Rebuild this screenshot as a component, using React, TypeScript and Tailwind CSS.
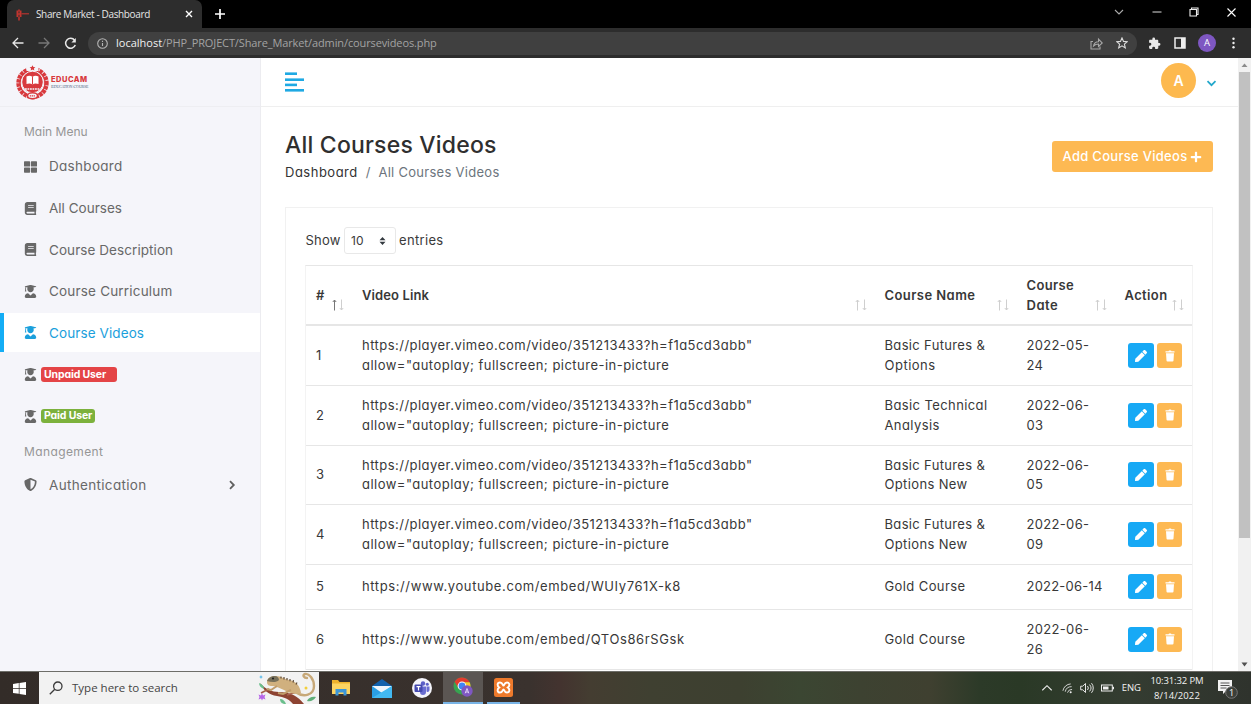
import type { ReactNode } from "react";
import { FaBook, FaPen, FaPlus, FaShieldAlt, FaThLarge, FaUserGraduate } from "react-icons/fa";

function BrowserChrome() {
  return (
    <div className="shrink-0 font-['Open_Sans',sans-serif]">
      <div className="flex h-7 bg-black">
        <div className="ml-[7px] flex w-[195px] items-center rounded-t-[7px] bg-[#2d2d2d] pl-[8px]">
          <svg className="size-[15px]" viewBox="0 0 15 15">
            <g fill="none" stroke="#c0342f">
              <path d="M2.500 3.500v6.500M5.500 3.500v6.500" strokeWidth="2" />
              <path d="M2 7h4M4 10v3.500M4 2.500v2" strokeWidth="1.6" />
              <path d="M6.500 6.800h7.500" strokeWidth="1.1" />
            </g>
          </svg>
          <span className="ml-[6px] whitespace-nowrap text-[10px] tracking-[-0.36px] text-[#e6e6e6]">
            Share Market - Dashboard
          </span>
          <svg className="ml-[35px] size-[8px]" viewBox="0 0 8 8" stroke="#fff" strokeWidth="1.4">
            <path d="M1 1l6 6M7 1L1 7" />
          </svg>
        </div>
        <svg className="ml-[13px] mt-[9px] size-[10px]" viewBox="0 0 10 10" stroke="#fff" strokeWidth="1.7">
          <path d="M5 0v10M0 5h10" />
        </svg>
        <div className="ml-auto flex items-center pb-[4px] pr-[15px]">
          <svg className="size-[10px]" viewBox="0 0 10 10" fill="none" stroke="#aaa" strokeWidth="1.1">
            <path d="M1 3l4 4 4-4" />
          </svg>
          <svg className="ml-[28px] size-[10px]" viewBox="0 0 10 10" stroke="#ddd" strokeWidth="1">
            <path d="M.5 5h9" />
          </svg>
          <svg className="ml-[27px] size-[10px]" viewBox="0 0 10 10" fill="none" stroke="#eee" strokeWidth="1.1">
            <path d="M1 2.5h6.5V9H1zM2.5 2.5V1H9v6.5H7.5" />
          </svg>
          <svg className="ml-[28px] size-[9px]" viewBox="0 0 9 9" stroke="#fff" strokeWidth="1.1">
            <path d="M.5.5l8 8M8.5.5l-8 8" />
          </svg>
        </div>
      </div>
      <div className="flex h-[30px] items-center bg-[#2d2d2d] pl-[12px] pr-[16px]">
        <svg className="size-[12px]" viewBox="0 0 12 12" fill="none" stroke="#e8e8e8" strokeWidth="1.3">
          <path d="M11.5 6H1.2M6 1L1 6l5 5" />
        </svg>
        <svg className="ml-[14px] size-[12px]" viewBox="0 0 12 12" fill="none" stroke="#777" strokeWidth="1.3">
          <path d="M.5 6h10.3M6 1l5 5-5 5" />
        </svg>
        <svg className="ml-[14px] size-[13px]" viewBox="0 0 13 13" fill="none" stroke="#e8e8e8" strokeWidth="1.5">
          <path d="M10.6 3.2A5 5 0 1 0 11.3 8" />
          <path d="M11.8 1v4.400H7.400z" fill="#e8e8e8" stroke="none" />
        </svg>
        <div className="ml-[11px] flex h-[23px] w-[1049px] items-center rounded-full bg-[#404040] pl-[9px] pr-[9px]">
          <svg className="size-[11px]" viewBox="0 0 11 11" fill="none" stroke="#b5b5b5" strokeWidth="1.1">
            <circle cx="5.5" cy="5.5" r="4.8" />
            <path d="M5.5 5v3M5.5 2.8v1.1" />
          </svg>
          <span className="ml-[8px] whitespace-nowrap text-[11px] text-[#a3a3a3]">
            <span className="text-[#f1f1f1]">localhost</span>
            <span className="tracking-[-0.12px]">/PHP_PROJECT/Share_Market/admin/coursevideos.php</span>
          </span>
          <svg className="ml-auto size-[13px]" viewBox="0 0 13 13" fill="none" stroke="#a8a8a8" strokeWidth="1.1">
            <path d="M3 4.500H1v7.500h9V9.500" />
            <path d="M3.500 9C4 6 6 4.700 8.500 4.700V2.200L12.300 6 8.500 9.500V7C6.500 7 5 7.500 3.500 9z" />
          </svg>
          <svg className="ml-[13px] size-[12px]" viewBox="0 0 12 12" fill="none" stroke="#ddd" strokeWidth="1.1">
            <path d="M6 .9l1.500 3.500 3.800.3-2.900 2.500.9 3.700L6 8.900l-3.300 2 .9-3.700L.7 4.700l3.800-.3z" />
          </svg>
        </div>
        <svg className="ml-[11px] size-[13px]" viewBox="0 0 24 24" fill="#e8e8e8">
          <path d="M20.500 11H19V7c0-1.100-.9-2-2-2h-4V3.500a2.500 2.500 0 0 0-5 0V5H4c-1.100 0-2 .9-2 2v3.800h1.500a2.700 2.700 0 0 1 0 5.400H2V20c0 1.100.9 2 2 2h3.800v-1.500a2.700 2.700 0 0 1 5.400 0V22H17c1.100 0 2-.9 2-2v-4h1.500a2.500 2.500 0 0 0 0-5z" />
        </svg>
        <svg className="ml-[13px] size-[12px]" viewBox="0 0 12 12">
          <path d="M1 1h10v10H1z" fill="none" stroke="#eee" strokeWidth="1.5" />
          <path d="M7 1h4v10H7z" fill="#eee" />
        </svg>
        <div className="ml-[12px] flex size-[18px] items-center justify-center rounded-full bg-[#7e57c2] text-[9.5px] text-white">
          A
        </div>
        <svg className="ml-auto h-[12px] w-[3px]" viewBox="0 0 3 12" fill="#eee">
          <circle cx="1.5" cy="1.7" r="1.2" />
          <circle cx="1.5" cy="6" r="1.2" />
          <circle cx="1.5" cy="10.3" r="1.2" />
        </svg>
      </div>
    </div>
  );
}

function Logo() {
  return (
    <div className="flex h-[48px] items-center pl-[15px] pt-[1px]">
      <svg className="h-[35px] w-[35px]" viewBox="0 0 35 35">
        <circle cx="17.5" cy="18" r="14" fill="none" stroke="#d83a3e" strokeWidth="4.4" strokeDasharray="3.4 .7" strokeDashoffset="1" />
        <circle cx="17.5" cy="18" r="12.6" fill="none" stroke="#d83a3e" strokeWidth="1.2" />
        <path d="M11.500 0h12v6h-12z" fill="#f5f5fa" />
        <path d="M17.500.3l.9 1.800 2 .2-1.500 1.300.4 2-1.800-1-1.800 1 .4-2-1.500-1.300 2-.2z" fill="#d83a3e" />
        <circle cx="17.5" cy="17" r="10.800" fill="#d83a3e" stroke="#f5f5fa" strokeWidth="1" />
        <path d="M11.500 11.500c2.300-1.200 4.500-.9 6 .5 1.500-1.400 3.700-1.700 6-.5v7.500c-2.300-.9-4.500-.7-6 .5-1.500-1.200-3.700-1.400-6-.5z" fill="#fff" />
        <path d="M17.500 12v7.500" stroke="#d83a3e" fill="none" />
        <path d="M10 24h15" stroke="#f5f5fa" strokeWidth="1.5" strokeDasharray="1.8 .7" />
        <ellipse cx="17.5" cy="30.800" rx="5" ry="3" fill="#f5f5fa" stroke="#d83a3e" strokeWidth="1.500" />
        <path d="M14.800 30.800h5.400" stroke="#d83a3e" strokeWidth="1.300" strokeDasharray="1.300 .6" />
      </svg>
      <div className="ml-[1px] whitespace-nowrap">
        <div className="font-['Inter',sans-serif] text-[7.5px] font-extrabold leading-[8px] tracking-[0.5px] text-[#d8383c]">
          EDUCAM
        </div>
        <div className="font-['Liberation_Serif',serif] text-[5px] leading-[6px] tracking-[-0.25px] text-[#4d6384] [font-variant-caps:small-caps]">
          Education Course
        </div>
      </div>
    </div>
  );
}

function NavItem({ icon, active, children }: { icon: ReactNode; active?: boolean; children: ReactNode }) {
  return (
    <div
      className={
        active
          ? "mb-[2.6px] flex h-[39px] items-center border-l-4 border-[#14adf5] bg-white pl-[20px] text-[#1ba0dc]"
          : "mb-[2.6px] flex h-[39px] items-center pl-[24px] text-[#686868]"
      }
    >
      <span className="flex w-[13px] shrink-0 justify-center">{icon}</span>
      {children}
    </div>
  );
}

function Sidebar() {
  const cap = <FaUserGraduate className="size-[13px]" />;
  return (
    <div className="w-[261px] shrink-0 border-r border-[#ececf0] bg-[#f5f5fa] text-[13.5px]">
      <Logo />
      <div className="flex h-[41px] items-end border-t border-[#eeeef2] pb-[6px] pl-[24px] text-[12px] text-[#969696]">
        Main Menu
      </div>
      <NavItem icon={<FaThLarge className="size-[14px]" />}>
        <span className="ml-[12px] tracking-[0.3px]">Dashboard</span>
      </NavItem>
      <NavItem icon={<FaBook className="size-[13px]" />}>
        <span className="ml-[12px] tracking-[0.02px]">All Courses</span>
      </NavItem>
      <NavItem icon={<FaBook className="size-[13px]" />}>
        <span className="ml-[12px] tracking-[0.07px]">Course Description</span>
      </NavItem>
      <NavItem icon={cap}>
        <span className="ml-[12px] tracking-[0.19px]">Course Curriculum</span>
      </NavItem>
      <NavItem active icon={cap}>
        <span className="ml-[12px] tracking-[0.1px]">Course Videos</span>
      </NavItem>
      <NavItem icon={cap}>
        <span className="ml-[4px] flex h-[14.5px] w-[76px] items-center rounded-[3px] bg-[#e44446] pl-[3px] text-[10.5px] font-bold tracking-[-0.13px] text-white">
          Unpaid User
        </span>
      </NavItem>
      <NavItem icon={cap}>
        <span className="ml-[4px] flex h-[14.5px] w-[54px] items-center rounded-[3px] bg-[#7cb13c] pl-[3px] text-[10.5px] font-bold tracking-[-0.13px] text-white">
          Paid User
        </span>
      </NavItem>
      <div className="flex h-[27px] items-center pl-[24px] text-[12px] tracking-[0.38px] text-[#969696]">Management</div>
      <NavItem icon={<FaShieldAlt className="size-[13px]" />}>
        <span className="ml-[12px] tracking-[0.33px]">Authentication</span>
        <svg className="ml-auto mr-[23px] size-[10px]" viewBox="0 0 10 10" fill="none" stroke="#606060" strokeWidth="1.800">
          <path d="M3 1.200L6.800 5 3 8.800" />
        </svg>
      </NavItem>
    </div>
  );
}

function SortArrows({ up }: { up?: boolean }) {
  return (
    <svg className="absolute bottom-[13px] right-[7px] h-[12px] w-[14px]" viewBox="0 0 14 12" fill="none">
      <path d="M3.500 11.500V1M1.800 3l1.700-2 1.700 2" stroke={up ? "#777" : "#cfcfcf"} />
      <path d="M10.500.5V11M8.800 9l1.700 2 1.700-2" stroke="#cfcfcf" />
    </svg>
  );
}

const cols = "grid grid-cols-[46px_522.500px_142px_98px_1fr]";

type Line = [string, string];
type Row = { h: string; link: Line[]; name: Line[]; date: Line[] };

const vimeo: Line[] = [
  ['https://player.vimeo.com/video/351213433?h=f1a5cd3abb"', "tracking-[0.47px]"],
  ['allow="autoplay; fullscreen; picture-in-picture', "tracking-[0.475px]"],
];
const basicFutures: Line = ["Basic Futures &", "tracking-[0.34px]"];
const june: Line = ["2022-06-", "tracking-[0.33px]"];

const rows: Row[] = [
  { h: "h-[60px]", link: vimeo, name: [basicFutures, ["Options", "tracking-[0.5px]"]], date: [["2022-05-", "tracking-[0.33px]"], ["24", "tracking-[0.2px]"]] },
  { h: "h-[59.5px]", link: vimeo, name: [["Basic Technical", "tracking-[0.4px]"], ["Analysis", "tracking-[0.4px]"]], date: [june, ["03", "tracking-[0.2px]"]] },
  { h: "h-[59.5px]", link: vimeo, name: [basicFutures, ["Options New", "tracking-[0.36px]"]], date: [june, ["05", "tracking-[0.2px]"]] },
  { h: "h-[59.5px]", link: vimeo, name: [basicFutures, ["Options New", "tracking-[0.36px]"]], date: [june, ["09", "tracking-[0.2px]"]] },
  { h: "h-[45.5px]", link: [["https://www.youtube.com/embed/WUIy761X-k8", "tracking-[0.606px]"]], name: [["Gold Course", "tracking-[0.4px]"]], date: [["2022-06-14", "tracking-[0.21px]"]] },
  { h: "h-[59.5px]", link: [["https://www.youtube.com/embed/QTOs86rSGsk", "tracking-[0.6px]"]], name: [["Gold Course", "tracking-[0.4px]"]], date: [june, ["26", "tracking-[0.2px]"]] },
];

function Cell({ lines }: { lines: Line[] }) {
  return (
    <div className="flex flex-col justify-center whitespace-nowrap pl-[10px] pt-[1px] leading-[19.6px]">
      {lines.map(([text, cls]) => (
        <div key={text} className={cls}>
          {text}
        </div>
      ))}
    </div>
  );
}

function CourseTable() {
  return (
    <div className="mt-[11px] border-x border-t border-[#e6e6e6] border-x-[#f3f3f3] text-[13px] text-[#383838]">
      <div className={`${cols} h-[60px] items-stretch border-b-2 border-[#e6e6e6] font-semibold leading-[19.6px]`}>
        <div className="relative flex items-center pl-[10px] pt-[2px]">
          #<SortArrows up />
        </div>
        <div className="relative flex items-center pl-[10px] pt-[2px] tracking-[0.1px]">
          Video Link
          <SortArrows />
        </div>
        <div className="relative flex items-center pl-[10px] pt-[2px] tracking-[0.44px]">
          Course Name
          <SortArrows />
        </div>
        <div className="relative flex flex-col justify-center pl-[10px] pt-[2px]">
          <span className="tracking-[0.34px]">Course</span>
          <span className="tracking-[0.55px]">Date</span>
          <SortArrows />
        </div>
        <div className="relative flex items-center pl-[10px] pt-[2px] tracking-[0.38px]">
          Action
          <SortArrows />
        </div>
      </div>
      {rows.map((r, i) => (
        <div key={i} className={`${cols} ${r.h} border-b border-[#e6e6e6]`}>
          <Cell lines={[[String(i + 1), ""]]} />
          <Cell lines={r.link} />
          <Cell lines={r.name} />
          <Cell lines={r.date} />
          <div className="flex items-center gap-[3px] pl-[13.5px] text-white">
            <span className="flex h-[25px] w-[26px] items-center justify-center rounded-[3px] bg-[#17a9f5]">
              <FaPen className="size-[12px]" />
            </span>
            <span className="flex h-[25px] w-[25px] items-center justify-center rounded-[3px] bg-[#fdb953]">
              <svg className="size-[12px]" viewBox="0 0 12 12" fill="#fff">
                <path d="M1.500 1.200h3L5 .5h2l.5.700h3v1.300h-9zM2 3.200h8l-.5 7.300a1 1 0 0 1-1 1h-5a1 1 0 0 1-1-1z" />
              </svg>
            </span>
          </div>
        </div>
      ))}
    </div>
  );
}

function Main() {
  return (
    <div className="flex min-w-0 flex-1 flex-col bg-white">
      <div className="flex h-[49px] shrink-0 items-center border-b border-[#efefef] pl-[24px] pr-[21px]">
        <svg className="h-[20px] w-[19px]" viewBox="0 0 19 20" fill="#1fa9e3">
          <rect y=".4" width="12" height="2.6" />
          <rect y="6.4" width="19" height="2.6" />
          <rect y="11.6" width="12" height="2.6" />
          <rect y="17" width="19" height="2.6" />
        </svg>
        <div className="mb-[3px] ml-auto flex size-[35px] items-center justify-center rounded-full bg-[#fdb94f] text-[14px] font-semibold text-white">
          A
        </div>
        <svg className="ml-[10px] mt-[3px] size-[11px]" viewBox="0 0 11 11" fill="none" stroke="#22a7cb" strokeWidth="1.7">
          <path d="M1.500 3.200l4 4 4-4" />
        </svg>
      </div>
      <div className="flex h-[100px] shrink-0 justify-between pl-[24px] pr-[25px]">
        <div className="pt-[22px]">
          <h1 className="text-[23px] font-medium leading-[32px] tracking-[0.2px] text-[#2f2f2f]">All Courses Videos</h1>
          <div className="flex text-[13px] leading-[23px]">
            <span className="tracking-[0.5px] text-[#333]">Dashboard</span>
            <span className="ml-[8px] text-[#6c757d]">/</span>
            <span className="ml-[8px] tracking-[0.28px] text-[#6c757d]">All Courses Videos</span>
          </div>
        </div>
        <div className="mt-[34px] flex h-[31px] w-[161px] items-center rounded-[3px] bg-[#fdb953] pl-[10.500px] pt-[1px] text-[13px] font-medium text-white">
          <span className="whitespace-nowrap tracking-[0.29px]">Add Course Videos</span>
          <FaPlus className="ml-[3px] size-[12px]" />
        </div>
      </div>
      <div className="ml-[24px] mr-[25px] flex-1 border border-b-0 border-[#f1f1f1] px-[19px] pt-[19px]">
        <div className="flex h-[27px] items-center text-[13px] text-[#3a3a3a]">
          <span className="w-[39px] pl-[.5px] tracking-[0.19px]">Show</span>
          <span className="flex h-[27px] w-[52px] items-center justify-between rounded-[3px] border border-[#e8e8e8] pl-[6px] pr-[9px] text-[12px]">
            10
            <svg className="h-[8px] w-[7px]" viewBox="0 0 7 8" fill="#343a40">
              <path d="M3.500 0l3 3.300h-6zM3.500 8l3-3.300h-6z" />
            </svg>
          </span>
          <span className="ml-[3px] tracking-[0.33px]">entries</span>
        </div>
        <CourseTable />
      </div>
    </div>
  );
}

function Scrollbar() {
  return (
    <div className="flex w-[13px] shrink-0 flex-col items-center bg-[#f1f1f1]">
      <svg className="h-[14px] w-[7px]" viewBox="0 0 7 14" fill="#8b8b8b">
        <path d="M3.500 5.500L6.500 9h-6z" />
      </svg>
      <div className="h-[466px] w-[11px] bg-[#c1c1c1]" />
      <svg className="mt-auto h-[14px] w-[7px]" viewBox="0 0 7 14" fill="#505050">
        <path d="M3.500 9.500L.5 5.500h6z" />
      </svg>
    </div>
  );
}

function Lizard() {
  return (
    <svg className="h-[32px] w-[62px]" viewBox="0 0 62 32">
      <path d="M3 11c5 6 12 9 19 9 11 0 19 4 25 12H36c-4-5-9-7-16-8C12 23 6 18 3 11z" fill="#8d4332" />
      <path d="M4 21l8-4M30 23l10-3" stroke="#a5604a" strokeWidth="1.600" />
      <path d="M50 29c4 1 7-1 9-4-4-1-8 1-9 4z" fill="#5fae78" />
      <path d="M2 11c3 1 5 3 5 6-3-1-5-3-5-6zM23 27c3 0 5 2 6 5-4 0-6-2-6-5z" fill="#6abf8c" />
      <path d="M38 20c9 6 19 3 19-6 0-7-5-13-9-12-3 1-1 4 2 4" fill="none" stroke="#c7a878" strokeWidth="2.400" strokeLinecap="round" />
      <path d="M10 10c0-4 4-6 9-6 5 0 8 3 13 4 7 1 11 6 12 13-5 2-12 0-17-3-5-2-8-4-12-4-3 0-5-1-5-4z" fill="#d0b07e" />
      <path d="M10 9c1-3 4-5 8-5 2 0 4 2 4 4-3 3-8 2-12 1z" fill="#77705a" />
      <circle cx="16" cy="6.500" r="1.100" fill="#222" />
      <path d="M24 6.500v-2M27 7.500V5M30 8.300V6M33 9.200V7M36 10.500l.5-2.300M39 12.500l1-2" stroke="#5e4a38" strokeWidth="1.200" />
      <path d="M20 14l-6 4-4-1M34 18l-8 4-5-1" fill="none" stroke="#c09c6a" strokeWidth="2" />
      <path d="M5 21l1 2.500 2.500-1-1 2.500 1 2.500-2.500-1-1 2-1-2-2.500 1 1-2.500-1-2.500 2.500 1z" fill="#b665e8" />
      <path d="M4 3l.7 1.600L6 5l-1.300.5L4 7l-.7-1.500L2 5l1.300-.4z" fill="#53b7e8" />
      <circle cx="49" cy="16" r="1.500" fill="#f2cf3a" />
    </svg>
  );
}

function Taskbar() {
  return (
    <div className="flex h-[33px] shrink-0 border-t border-[#6d6d68] bg-[linear-gradient(90deg,#332c28_0px,#3a322e_530px,#43332f_560px,#443d31_590px,#3f4031_650px,#3d4030_740px,#3b4632_800px,#3d4231_860px,#3f4030_930px,#2c3a28_980px,#2a3926_1020px,#343c31_1130px,#2f332d_1251px)] font-['Open_Sans',sans-serif] text-[#f2f2f2]">
      <div className="flex w-[39px] items-center justify-center">
        <svg className="size-[13px]" viewBox="0 0 13 13" fill="#fff">
          <path d="M0 1.900l5.800-.8v5H0zM6.500 1L13 0v6.100H6.500zM0 6.800h5.800v5L0 11zM6.500 6.800H13V13l-6.500-.9z" />
        </svg>
      </div>
      <div className="flex w-[280px] items-center bg-[#f2f2f2] pl-[10px]">
        <svg className="size-[14px]" viewBox="0 0 14 14" fill="none" stroke="#3b3b3b" strokeWidth="1.3">
          <circle cx="8.8" cy="5.2" r="4.2" />
          <path d="M5.800 8.200L.8 13.200" />
        </svg>
        <span className="ml-[9px] whitespace-nowrap text-[11.5px] text-[#444]">Type here to search</span>
        <div className="ml-auto">
          <Lizard />
        </div>
      </div>
      <div className="flex w-[44px] items-center justify-center">
        <svg className="h-[16px] w-[18px]" viewBox="0 0 18 16">
          <path d="M0 0h6l1.500 2H18v12H0z" fill="#eeb22d" />
          <path d="M0 3.500h18V14H0z" fill="#fcd462" />
          <path d="M3.500 15.500V9h11v6.500h-3v-3h-5v3z" fill="#3c96d8" />
        </svg>
      </div>
      <div className="flex w-[37px] items-center justify-center">
        <svg className="h-[19px] w-[20px]" viewBox="0 0 20 19">
          <path d="M0 7l10-7 10 7v2H0z" fill="#1261ac" />
          <path d="M0 7h20v12H0z" fill="#2a9fe5" />
          <path d="M0 7h20l-10 7z" fill="#eef5fb" />
          <path d="M0 19l20-12v12z" fill="#42b9f2" />
        </svg>
      </div>
      <div className="flex w-[43px] items-center justify-center">
        <svg className="size-[20px]" viewBox="0 0 20 20">
          <circle cx="10" cy="10" r="10" fill="#f4f4fb" />
          <circle cx="11" cy="5.5" r="2.2" fill="#5b5fc7" />
          <circle cx="15.3" cy="6.2" r="1.5" fill="#5b5fc7" />
          <path d="M8 8.500h6V14a3 3 0 0 1-6 0zM14.500 8.500h3V12a2 2 0 0 1-3 1.600z" fill="#6a6ed2" />
          <rect x="2.5" y="6.5" width="8" height="7.5" rx="1" fill="#4449b0" />
          <path d="M4.500 8.600h4M6.500 8.600v4" stroke="#fff" strokeWidth="1.2" />
        </svg>
      </div>
      <div className="flex w-[40px] items-center justify-center border-b-2 border-[#79b4e6] bg-[#5b5653]">
        <svg className="size-[20px]" viewBox="0 0 20 20">
          <circle cx="9" cy="9" r="8.5" fill="#37a451" />
          <path d="M1.600 4.800A8.500 8.500 0 0 1 16.800 5.500H9L5.500 11z" fill="#e33b2e" />
          <path d="M9 5.200h7.600A8.500 8.500 0 0 1 9.500 17.500L13 11z" fill="#f8c92e" />
          <circle cx="9" cy="9" r="4.4" fill="#fff" />
          <circle cx="9" cy="9" r="3.4" fill="#4285f4" />
          <circle cx="14" cy="14" r="5.7" fill="#7e57c2" />
          <path d="M12.200 16.300L14 11.500l1.800 4.800M12.800 15h2.400" fill="none" stroke="#e8defa" strokeWidth=".9" />
        </svg>
      </div>
      <div className="ml-[4px] flex w-[33px] items-center justify-center border-b-2 border-[#79b4e6]">
        <svg className="size-[19px]" viewBox="0 0 19 19">
          <rect width="19" height="19" rx="2.5" fill="#ee7a2c" />
          <path d="M6 4.500C3 4.500 3 8 5.200 9.500 3 11 3 14.500 6 14.500s2.500-3 3.500-3 .5 3 3.500 3 3-3.500.8-5C16 8 16 4.500 13 4.500s-2.500 3-3.500 3-.5-3-3.500-3z" fill="none" stroke="#fff" strokeWidth="1.9" />
        </svg>
      </div>
      <div className="ml-auto flex items-center">
        <svg className="size-[10px]" viewBox="0 0 10 10" fill="none" stroke="#eee" strokeWidth="1.1">
          <path d="M.3 7.300L5 2.700l4.700 4.600" />
        </svg>
        <svg className="ml-[10px] size-[11px]" viewBox="0 0 12 12" fill="none" stroke="#ddd">
          <path d="M1 8.500A9 9 0 0 1 9.500 1M3.500 9.500A7 7 0 0 1 10.500 4M6 10.500A5 5 0 0 1 11 7" />
          <circle cx="9.5" cy="10" r="1.1" fill="#eee" stroke="none" />
        </svg>
        <svg className="ml-[7px] h-[12px] w-[14px]" viewBox="0 0 14 12" fill="none" stroke="#e5e5e5">
          <path d="M.7 4.200h2L5.500 1.500v9L2.700 7.800h-2zM7.500 4a3 3 0 0 1 0 4M9.500 2.600a5 5 0 0 1 0 6.800M11.500 1.200a7.500 7.500 0 0 1 0 9.600" />
        </svg>
        <svg className="ml-[7px] h-[8px] w-[13px]" viewBox="0 0 13 8">
          <rect x=".5" y="1" width="10.8" height="6" fill="none" stroke="#eee" />
          <rect x="2" y="2.5" width="5.5" height="3" fill="#eee" />
          <rect x="11.5" y="2.8" width="1.5" height="2.5" fill="#eee" />
        </svg>
        <span className="ml-[8px] text-[9.5px]">ENG</span>
        <div className="ml-[8px] w-[56px] text-center text-[9.5px] leading-[15px]">
          <div className="whitespace-nowrap tracking-[-0.12px]">10:31:32 PM</div>
          <div className="tracking-[0.1px]">8/14/2022</div>
        </div>
        <svg className="ml-[13px] mr-[13px] mt-[1px] h-[20px] w-[20px]" viewBox="0 0 20 20">
          <path d="M0 1h14v11H8l-3 3v-3H0z" fill="#f2f2f2" />
          <path d="M2.500 4h9M2.500 6.500h9M2.500 9h6" stroke="#444" strokeWidth=".9" />
          <circle cx="13.5" cy="13.5" r="5.8" fill="#3b3f3a" stroke="#777" />
          <text x="13.5" y="16.8" textAnchor="middle" fontSize="9" fill="#fff">
            1
          </text>
        </svg>
      </div>
    </div>
  );
}

export default function App() {
  return (
    <div className="flex h-[704px] w-[1251px] flex-col overflow-hidden font-['Inter',sans-serif]">
      <BrowserChrome />
      <div className="flex min-h-0 flex-1 overflow-hidden [font-feature-settings:'cv11']">
        <Sidebar />
        <Main />
        <Scrollbar />
      </div>
      <Taskbar />
    </div>
  );
}
